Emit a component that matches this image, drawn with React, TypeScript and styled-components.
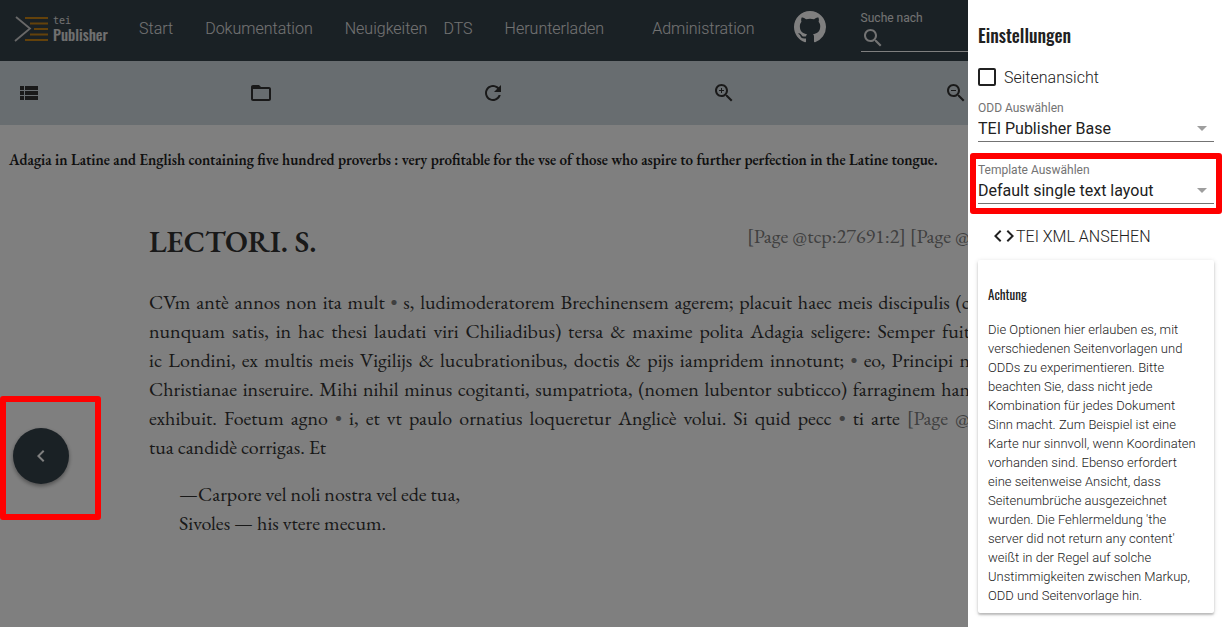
import React from "react";
import styled, { createGlobalStyle } from "styled-components";

const condensed = `"Oswald", "Liberation Sans Narrow", "Roboto Condensed", sans-serif`;
const serif = `"Junicode", "EB Garamond", "Liberation Serif", serif`;

const GlobalStyle = createGlobalStyle`
  * { box-sizing: border-box; }
  html, body { margin: 0; }
  body {
    background: #fff;
    color: #333;
    font-family: Roboto, sans-serif;
    font-size: 16px;
    overflow: hidden;
  }
  button, input, select { font: inherit; color: inherit; }
`;

const Page = styled.div`
  min-height: 100vh;
  overflow: hidden;
`;

const Header = styled.header`
  display: flex;
  align-items: center;
  height: 61px;
  padding: 0 0 4px 14px;
  background: #35424b;
  color: #fff;
  white-space: nowrap;
`;

const Logo = styled.a`
  display: flex;
  align-items: center;
  gap: 3px;
  width: 125px;
  flex: none;
  color: #e0e0e0;
  text-decoration: none;
`;

const LogoText = styled.span`
  display: flex;
  flex-direction: column;
`;

const LogoTop = styled.span`
  font: 10px/10px "DejaVu Sans Mono", monospace;
`;

const LogoName = styled.span`
  font: 500 15px/16px ${condensed};
`;

const Nav = styled.nav`
  display: flex;
  align-items: center;
`;

const NavLink = styled.a<{ $gap: number }>`
  margin-right: ${(p) => p.$gap}px;
  color: #e6e6e6;
  font-size: 16px;
  font-weight: 300;
  line-height: 24px;
  text-decoration: none;
`;

const IconLink = styled.a`
  display: flex;
  margin: 0 35px 4px 0;
  color: #fff;
`;

const Search = styled.label`
  display: flex;
  flex-direction: column;
  flex: 1;
  align-self: flex-end;
  height: 42px;
  margin-bottom: 5px;
  border-bottom: 1px solid #fff;
  color: #e6e6e6;
  font-size: 12px;
  line-height: 16px;
`;

const SearchRow = styled.span`
  display: flex;
  align-items: center;
`;

const SearchInput = styled.input`
  flex: 1;
  min-width: 0;
  height: 24px;
  padding: 0;
  border: 0;
  background: transparent;
  outline: 0;
`;

const Toolbar = styled.div`
  display: grid;
  grid-template-columns: repeat(5, 1fr);
  align-items: center;
  height: 64px;
  padding: 0 54px 0 9px;
  background: #d1dae0;
`;

const IconButton = styled.button`
  display: grid;
  place-items: center;
  width: 40px;
  height: 40px;
  padding: 0;
  border: 0;
  background: transparent;
`;

const DocTitle = styled.h1`
  margin: 0;
  padding: 23px 9px 0;
  color: #212121;
  font: 600 15px/24px ${serif};
  white-space: nowrap;
`;

const Text = styled.article`
  padding: 50px 252px 40px 149px;
  font: 20px/29px ${serif};
`;

const HeadRow = styled.div`
  display: flex;
  justify-content: space-between;
  align-items: flex-start;
  margin-bottom: 26px;
  white-space: nowrap;
`;

const Heading = styled.h2`
  margin: 0;
  font: 600 30px/40px ${serif};
`;

const PageBreak = styled.span`
  color: #808080;
`;

const Paragraph = styled.p`
  margin: 0 0 18px;
`;

const Line = styled.span<{ $last?: boolean }>`
  display: block;
  white-space: ${(p) => (p.$last ? "nowrap" : "normal")};
  text-align: justify;
  text-align-last: ${(p) => (p.$last ? "left" : "justify")};
`;

const Verse = styled.p`
  margin: 0;
  padding-left: 30px;
`;

const Fab = styled.button`
  position: fixed;
  left: 13px;
  top: 428px;
  display: grid;
  place-items: center;
  width: 56px;
  height: 56px;
  padding: 0;
  border: 0;
  border-radius: 50%;
  background: #35424b;
  color: #fff;
  box-shadow: 0 2px 4px rgba(0, 0, 0, 0.4);
`;

const Backdrop = styled.div`
  position: fixed;
  inset: 0;
  background: rgba(0, 0, 0, 0.5);
`;

const FabFrame = styled.div`
  position: fixed;
  left: 0;
  top: 396px;
  width: 101px;
  height: 124px;
  border: 6px solid #f00;
  border-radius: 3px;
`;

const Drawer = styled.aside`
  position: fixed;
  top: 0;
  right: 0;
  bottom: 0;
  width: 254px;
  padding: 19px 8px 0 10px;
  background: #fff;
  color: #212121;
`;

const DrawerTitle = styled.h3`
  margin: 0 0 16px;
  font: 500 18px/32px ${condensed};
`;

const CheckLabel = styled.label`
  display: flex;
  align-items: center;
  gap: 8px;
  height: 20px;
  margin-bottom: 13px;
  font-weight: 300;
`;

const Checkbox = styled.input`
  appearance: none;
  width: 18px;
  height: 18px;
  margin: 0;
  border: 2px solid #212121;
  border-radius: 2px;
`;

const Field = styled.label<{ $marked?: boolean }>`
  position: relative;
  display: flex;
  flex-direction: column;
  height: 42px;
  margin-bottom: 20px;
  border-bottom: 1px solid #737373;
  color: #737373;
  font-size: 12px;
  line-height: 16px;

  &::after {
    content: "";
    display: ${(p) => (p.$marked ? "block" : "none")};
    position: absolute;
    inset: -9px -8px -11px;
    border: 6px solid #f00;
    border-radius: 3px;
    pointer-events: none;
  }
`;

const Select = styled.select`
  appearance: none;
  width: 100%;
  height: 26px;
  padding: 0;
  border: 0;
  background: transparent;
  color: #212121;
  font-size: 16px;
`;

const Arrow = styled.svg`
  position: absolute;
  right: 7px;
  top: 26px;
  fill: #9e9e9e;
`;

const XmlLink = styled.a`
  display: flex;
  align-items: center;
  height: 24px;
  padding-left: 14px;
  margin-bottom: 12px;
  color: #212121;
  font-weight: 300;
  text-decoration: none;
`;

const Card = styled.section`
  padding: 22px 14px 8px 10px;
  border-radius: 2px;
  box-shadow: 0 2px 2px rgba(0, 0, 0, 0.2), 0 1px 5px rgba(0, 0, 0, 0.14);
`;

const CardTitle = styled.h4`
  margin: 0 0 14px;
  font: 400 13px/24px ${condensed};
`;

const CardText = styled.p`
  margin: 0;
  font-size: 13px;
  font-weight: 300;
  line-height: 19px;
`;

const Icon = ({ d, size = 24 }: { d: string; size?: number }) => (
  <svg width={size} height={size} viewBox="0 0 24 24" fill="currentColor" aria-hidden="true">
    <path d={d} />
  </svg>
);

const searchPath =
  "M15.5 14h-.79l-.28-.27C15.41 12.59 16 11.11 16 9.5 16 5.91 13.09 3 9.5 3S3 5.91 3 9.5 5.91 16 9.5 16c1.61 0 3.09-.59 4.23-1.57l.27.28v.79l5 4.99L20.49 19l-4.99-5zm-6 0C7.01 14 5 11.99 5 9.5S7.01 5 9.5 5 14 7.01 14 9.5 11.99 14 9.5 14z";

const tools = [
  { label: "Inhalt", d: "M3 14h4v-4H3v4zm0 5h4v-4H3v4zM3 9h4V5H3v4zm5 5h13v-4H8v4zm0 5h13v-4H8v4zM8 5v4h13V5H8z" },
  { label: "Ordner", d: "M20 6h-8l-2-2H4c-1.1 0-1.99.9-1.99 2L2 18c0 1.1.9 2 2 2h16c1.1 0 2-.9 2-2V8c0-1.1-.9-2-2-2zm0 12H4V8h16v10z" },
  { label: "Neu laden", d: "M17.65 6.35C16.2 4.9 14.21 4 12 4c-4.42 0-7.99 3.58-7.99 8s3.57 8 7.99 8c3.73 0 6.84-2.55 7.73-6h-2.08c-.82 2.33-3.04 4-5.65 4-3.31 0-6-2.69-6-6s2.69-6 6-6c1.66 0 3.14.69 4.22 1.78L13 11h7V4l-2.35 2.35z" },
  { label: "Vergrößern", d: searchPath + "M12 10h-2v2H9v-2H7V9h2V7h1v2h2v1z" },
  { label: "Verkleinern", d: searchPath + "M7 9h5v1H7z" },
];

const links = [
  { label: "Start", gap: 32 },
  { label: "Dokumentation", gap: 32 },
  { label: "Neuigkeiten", gap: 16 },
  { label: "DTS", gap: 32 },
  { label: "Herunterladen", gap: 48 },
  { label: "Administration", gap: 39 },
];

const lines = [
  <>CVm antè annos non ita mult <PageBreak>•</PageBreak> s, ludimoderatorem Brechinensem agerem; placuit haec meis discipulis (c</>,
  <>nunquam satis, in hac thesi laudati viri Chiliadibus) tersa &amp; maxime polita Adagia seligere: Semper fuit</>,
  <>ic Londini, ex multis meis Vigilijs &amp; lucubrationibus, doctis &amp; pijs iampridem innotunt; <PageBreak>•</PageBreak> eo, Principi n</>,
  <>Christianae inseruire. Mihi nihil minus cogitanti, sumpatriota, (nomen lubentor subticco) farraginem han</>,
  <>exhibuit. Foetum agno <PageBreak>•</PageBreak> i, et vt paulo ornatius loqueretur Anglicè volui. Si quid pecc <PageBreak>•</PageBreak> ti arte <PageBreak>[Page @</PageBreak></>,
];

const Dropdown = ({ label, value, marked }: { label: string; value: string; marked?: boolean }) => (
  <Field $marked={marked}>
    {label}
    <Select defaultValue={value}>
      <option>{value}</option>
    </Select>
    <Arrow width="10" height="5" viewBox="0 0 10 5" aria-hidden="true">
      <path d="M0 0h10L5 5z" />
    </Arrow>
  </Field>
);

export default function App() {
  return (
    <Page>
      <GlobalStyle />
      <Header>
        <Logo href="#">
          <svg width="36" height="26" viewBox="0 0 36 26" fill="none" aria-hidden="true">
            <path d="M2 1 16 12.500 1 25" stroke="#d0d0d0" strokeWidth="1.800" />
            <path d="M11 2h23M16 7.500h18M20 13h14M16 18.500h18M11 24h23" stroke="#c98416" strokeWidth="1.800" />
          </svg>
          <LogoText>
            <LogoTop>tei</LogoTop>
            <LogoName>Publisher</LogoName>
          </LogoText>
        </Logo>
        <Nav>
          {links.map((l) => (
            <NavLink key={l.label} href="#" $gap={l.gap}>{l.label}</NavLink>
          ))}
          <IconLink href="#" aria-label="GitHub">
            <svg width="32" height="32" viewBox="0 0 16 16" fill="currentColor" aria-hidden="true">
              <path d="M8 0C3.580 0 0 3.580 0 8c0 3.540 2.290 6.530 5.470 7.590.4.070.55-.17.55-.38 0-.19-.01-.82-.01-1.490-2.010.37-2.530-.49-2.690-.94-.09-.23-.48-.94-.82-1.130-.28-.15-.68-.52-.01-.53.63-.01 1.080.58 1.230.82.72 1.210 1.870.87 2.330.66.07-.52.28-.87.51-1.070-1.780-.2-3.640-.89-3.640-3.950 0-.87.31-1.590.82-2.150-.08-.2-.36-1.020.08-2.120 0 0 .67-.21 2.200.82.64-.18 1.320-.27 2-.27s1.360.09 2 .27c1.530-1.040 2.200-.82 2.200-.82.44 1.100.16 1.920.08 2.120.51.56.82 1.270.82 2.150 0 3.070-1.870 3.750-3.650 3.950.29.25.54.73.54 1.480 0 1.070-.01 1.930-.01 2.200 0 .21.15.46.55.38A8.010 8.010 0 0 0 16 8c0-4.420-3.580-8-8-8z" />
            </svg>
          </IconLink>
        </Nav>
        <Search>
          Suche nach
          <SearchRow>
            <Icon d={searchPath} />
            <SearchInput type="text" />
          </SearchRow>
        </Search>
      </Header>
      <Toolbar>
        {tools.map((t) => (
          <IconButton key={t.label} aria-label={t.label}>
            <Icon d={t.d} />
          </IconButton>
        ))}
      </Toolbar>
      <main>
        <DocTitle>
          Adagia in Latine and English containing five hundred proverbs : very profitable for the vse of those who aspire to further perfection in the Latine tongue.
        </DocTitle>
        <Text>
          <HeadRow>
            <Heading>LECTORI. S.</Heading>
            <PageBreak>[Page @tcp:27691:2] [Page @</PageBreak>
          </HeadRow>
          <Paragraph>
            {lines.map((l, i) => (
              <Line key={i}>{l}</Line>
            ))}
            <Line $last>tua candidè corrigas. Et</Line>
          </Paragraph>
          <Verse>
            <Line $last>—Carpore vel noli nostra vel ede tua,</Line>
            <Line $last>Sivoles — his vtere mecum.</Line>
          </Verse>
        </Text>
      </main>
      <Fab aria-label="Vorherige Seite">
        <Icon d="M15.410 7.410 14 6l-6 6 6 6 1.410-1.410L10.830 12z" />
      </Fab>
      <Backdrop />
      <FabFrame />
      <Drawer>
        <DrawerTitle>Einstellungen</DrawerTitle>
        <CheckLabel>
          <Checkbox type="checkbox" />
          Seitenansicht
        </CheckLabel>
        <Dropdown label="ODD Auswählen" value="TEI Publisher Base" />
        <Dropdown label="Template Auswählen" value="Default single text layout" marked />
        <XmlLink href="#">
          <Icon d="M9.400 16.600 4.800 12l4.600-4.600L8 6l-6 6 6 6 1.400-1.400zm5.200 0 4.600-4.600-4.600-4.600L16 6l6 6-6 6-1.400-1.400z" />
          TEI XML ANSEHEN
        </XmlLink>
        <Card>
          <CardTitle>Achtung</CardTitle>
          <CardText>
            Die Optionen hier erlauben es, mit verschiedenen Seitenvorlagen und ODDs zu experimentieren. Bitte beachten Sie, dass nicht jede Kombination für jedes Dokument Sinn macht. Zum Beispiel ist eine Karte nur sinnvoll, wenn Koordinaten vorhanden sind. Ebenso erfordert eine seitenweise Ansicht, dass Seitenumbrüche ausgezeichnet wurden. Die Fehlermeldung 'the server did not return any content' weißt in der Regel auf solche Unstimmigkeiten zwischen Markup, ODD und Seitenvorlage hin.
          </CardText>
        </Card>
      </Drawer>
    </Page>
  );
}
